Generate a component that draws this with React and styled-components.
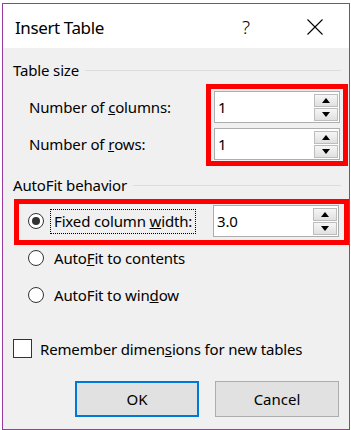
import React from 'react';
import styled, { createGlobalStyle } from 'styled-components';

const GlobalStyle = createGlobalStyle`
  html, body {
    margin: 0;
    padding: 0;
    background: #ffffff;
  }
  body {
    font-family: "Noto Sans", "Open Sans", sans-serif;
    color: #000000;
  }
  * {
    box-sizing: border-box;
  }
`;

const Window = styled.div`
  margin: 3px 0 0 2px;
  width: 348px;
  height: 427px;
  border: 1px solid #9b3a9e;
  background: #f0f0f0;
  display: flex;
  flex-direction: column;
`;

const TitleBar = styled.div`
  height: 44px;
  flex-shrink: 0;
  background: #ffffff;
  display: flex;
  align-items: center;
  padding: 0 11px 0 12px;
`;

const Title = styled.div`
  flex: 1;
  font-size: 17px;
  letter-spacing: -0.4px;
  padding-top: 2px;
`;

const HelpButton = styled.div`
  width: 24px;
  text-align: center;
  font-size: 19px;
  font-weight: 300;
  margin-right: 34px;
  padding-top: 2px;
`;

const CloseButton = styled.div`
  width: 46px;
  display: flex;
  justify-content: center;
  padding-top: 2px;
`;

const Body = styled.div`
  flex: 1;
  display: flex;
  flex-direction: column;
  padding: 12px 0 11px 10px;
  font-size: 15px;
  letter-spacing: -0.15px;
`;

const GroupHeader = styled.div`
  height: 20px;
  display: flex;
  align-items: center;
  gap: 6px;
  padding-right: 8px;
  margin-top: ${p => p.$top || 0}px;

  &::after {
    content: '';
    flex: 1;
    height: 1px;
    background: #dcdcdc;
  }
`;

const RedFrame = styled.div`
  border: 5px solid #ff0000;
`;

const SizeRow = styled.div`
  display: flex;
  justify-content: space-between;
  margin-top: 4px;
`;

const LabelColumn = styled.div`
  display: flex;
  flex-direction: column;
  gap: 5px;
  padding: 7px 0 0 16px;
`;

const FieldLabel = styled.div`
  height: 32px;
  display: flex;
  align-items: center;
`;

const SizeFrame = styled(RedFrame)`
  display: flex;
  flex-direction: column;
  gap: 5px;
  padding: 2px 3px 1px;
  margin-right: 1px;
`;

const SpinBox = styled.div`
  width: 126px;
  height: 32px;
  border: 1px solid #adadad;
  background: #ffffff;
  display: flex;
  align-items: center;
  padding: 0 1px 0 3px;
`;

const SpinValue = styled.span`
  flex: 1;
`;

const SpinButtons = styled.div`
  width: 24px;
  display: flex;
  flex-direction: column;
  gap: 1px;
`;

const SpinButton = styled.div`
  height: 13px;
  border: 1px solid #bdbdbd;
  background: linear-gradient(#f6f6f6, #e0e0e0);
  display: flex;
  align-items: center;
  justify-content: center;

  &::after {
    content: '';
    width: 0;
    height: 0;
    border-left: 4.5px solid transparent;
    border-right: 4.5px solid transparent;
    ${p => (p.$down ? 'border-top: 5px solid #000;' : 'border-bottom: 5px solid #000;')}
  }
`;

const AutoFrame = styled(RedFrame)`
  margin: 4px 0 0 1px;
  padding: 1px 5px 3px 9px;
  display: flex;
  align-items: center;
  justify-content: space-between;
`;

const OptionRow = styled.div`
  height: 24px;
  display: flex;
  align-items: center;
  margin-top: ${p => p.$top || 0}px;
  padding-left: ${p => p.$indent || 0}px;
`;

const Radio = styled.span`
  width: 16px;
  height: 16px;
  border-radius: 50%;
  border: 1px solid #333333;
  background: #ffffff;
  display: flex;
  align-items: center;
  justify-content: center;
  flex-shrink: 0;

  &::after {
    content: '';
    width: 8px;
    height: 8px;
    border-radius: 50%;
    background: ${p => (p.$checked ? '#333333' : 'transparent')};
  }
`;

const OptionText = styled.span`
  margin-left: 10px;
`;

const FocusText = styled.span`
  margin-left: 7px;
  padding: 1px 3px 2px;
  outline: 1px dotted #000000;
`;

const CheckRow = styled.div`
  display: flex;
  align-items: center;
  gap: 8px;
  margin-top: 32px;
  height: 19px;
`;

const CheckBox = styled.span`
  width: 19px;
  height: 19px;
  border: 1px solid #333333;
  background: #ffffff;
`;

const ButtonRow = styled.div`
  display: flex;
  justify-content: flex-end;
  gap: 16px;
  padding-right: 10px;
  margin-top: 23px;
`;

const DialogButton = styled.button`
  width: 124px;
  height: 36px;
  font: inherit;
  font-size: 15px;
  color: #000000;
  background: #e1e1e1;
  border: ${p => (p.$primary ? '2px solid #0078d7' : '1px solid #adadad')};
  padding: 0;
`;

function Spinner({ value }) {
  return (
    <SpinBox>
      <SpinValue>{value}</SpinValue>
      <SpinButtons>
        <SpinButton />
        <SpinButton $down />
      </SpinButtons>
    </SpinBox>
  );
}

export default function App() {
  return (
    <>
      <GlobalStyle />
      <Window>
        <TitleBar>
          <Title>Insert Table</Title>
          <HelpButton>?</HelpButton>
          <CloseButton>
            <svg width="16" height="16" viewBox="0 0 16 16">
              <path d="M0.5 0.5 L15.5 15.5 M15.5 0.5 L0.5 15.5" stroke="#000" strokeWidth="1.1" fill="none" />
            </svg>
          </CloseButton>
        </TitleBar>
        <Body>
          <GroupHeader>Table size</GroupHeader>
          <SizeRow>
            <LabelColumn>
              <FieldLabel>Number of&nbsp;<u>c</u>olumns:</FieldLabel>
              <FieldLabel>Number of&nbsp;<u>r</u>ows:</FieldLabel>
            </LabelColumn>
            <SizeFrame>
              <Spinner value="1" />
              <Spinner value="1" />
            </SizeFrame>
          </SizeRow>

          <GroupHeader $top={9}>AutoFit behavior</GroupHeader>
          <AutoFrame>
            <OptionRow>
              <Radio $checked />
              <FocusText>Fixed column <u>w</u>idth:</FocusText>
            </OptionRow>
            <Spinner value="3.0" />
          </AutoFrame>
          <OptionRow $top={1} $indent={15}>
            <Radio />
            <OptionText>Auto<u>F</u>it to contents</OptionText>
          </OptionRow>
          <OptionRow $top={13} $indent={15}>
            <Radio />
            <OptionText>AutoFit to win<u>d</u>ow</OptionText>
          </OptionRow>

          <CheckRow>
            <CheckBox />
            <span>Remember dimen<u>s</u>ions for new tables</span>
          </CheckRow>

          <ButtonRow>
            <DialogButton $primary>OK</DialogButton>
            <DialogButton>Cancel</DialogButton>
          </ButtonRow>
        </Body>
      </Window>
    </>
  );
}
